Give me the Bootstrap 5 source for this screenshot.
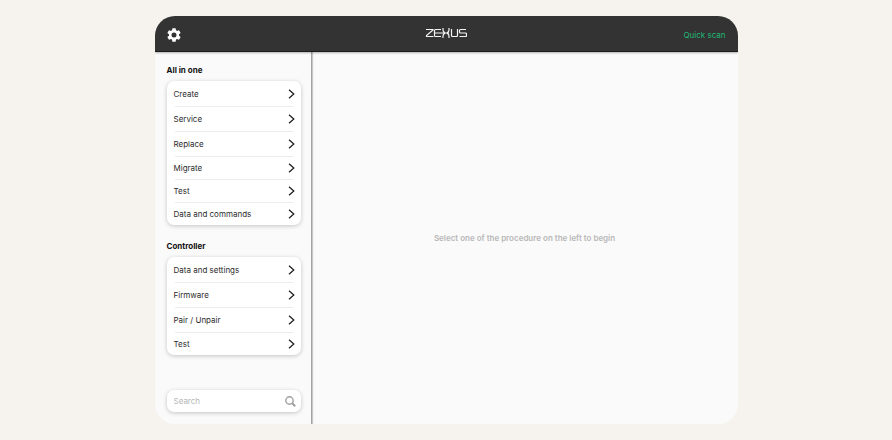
<!DOCTYPE html>
<html lang="en">
<head>
<meta charset="utf-8">
<meta name="viewport" content="width=device-width, initial-scale=1">
<title>Zehus</title>
<link href="https://cdn.jsdelivr.net/npm/bootstrap@5.3.0/dist/css/bootstrap.min.css" rel="stylesheet">
<style>
  body { background: #f6f3ee; font-family: Inter, "Liberation Sans", sans-serif; font-size: 8px; line-height: 12px; color: #2c2c2c; }
  .app-window { width: 100%; max-width: 583px; border-radius: 20px; background: #fafafa; }
  .app-bar { height: 36px; padding: 3px 12px 0; background: #333; border-bottom: 1px solid #1c1c1c; box-shadow: 0 1px 2px rgba(0,0,0,.3); z-index: 1; }
  .app-bar svg, .menu-row svg, .search-box svg { display: block; }
  .settings-btn { line-height: 0; }
  .quick-link { color: #1fb876; }
  .side-panel { width: 157px; padding: 12px 10px 12px 12px; border-right: 1px solid #a3a3a3; box-shadow: 1px 0 1px rgba(0,0,0,.2); }
  .group-title { font-size: 8px; line-height: 12px; font-weight: 700; color: #111; }
  .soft-card { background: #fff; border-radius: 7px; box-shadow: 0 1px 4px rgba(0,0,0,.22); }
  .menu-card { margin: 5px 0 15px; }
  .menu-row { height: 25px; padding: 0 6px 0 7px; color: #2c2c2c; }
  .menu-row.tight, .menu-row:last-child { height: 23px; }
  .menu-row + .menu-row { background: linear-gradient(#ececec, #ececec) 8px 0 / calc(100% - 16px) 1px no-repeat; }
  .search-box { height: 22px; padding: 0 5px 0 7px; }
  .search-box input { font-size: 8px; line-height: 16px; height: 20px; color: #2c2c2c; outline: 0; min-width: 0; }
  .search-box input::placeholder { color: #b5b5b5; opacity: 1; }
  .hint { color: #b8b8b8; font-weight: 600; }
</style>
<script src="https://cdn.jsdelivr.net/npm/bootstrap@5.3.0/dist/js/bootstrap.bundle.min.js"></script>
</head>
<body>
<svg class="d-none" aria-hidden="true">
  <symbol id="chevron" viewBox="0 0 7 10"><path d="M1 .8 5.800 5 1 9.200" fill="none" stroke="#1a1a1a" stroke-width="1.200"/></symbol>
</svg>
<div class="d-flex justify-content-center vh-100 py-3">
  <div class="app-window d-flex flex-column overflow-hidden">
    <header class="app-bar row gx-0 align-items-center position-relative m-0">
      <div class="col">
        <button type="button" class="settings-btn btn p-0 border-0" aria-label="Settings">
          <svg width="14" height="14" viewBox="2 2 20 20" fill="#fff"><path d="M19.14 12.94c.04-.3.06-.61.06-.94 0-.32-.02-.64-.07-.94l2.03-1.58a.49.49 0 0 0 .12-.61l-1.92-3.32a.488.488 0 0 0-.59-.22l-2.39.96c-.5-.38-1.03-.7-1.62-.94l-.36-2.54a.484.484 0 0 0-.48-.41h-3.84c-.24 0-.43.17-.47.41l-.36 2.54c-.59.24-1.13.57-1.62.94l-2.39-.96c-.22-.08-.47 0-.59.22L2.74 8.87c-.12.21-.08.47.12.61l2.03 1.58c-.05.3-.09.63-.09.94s.02.64.07.94l-2.03 1.58a.49.49 0 0 0-.12.61l1.92 3.32c.12.22.37.29.59.22l2.39-.96c.5.38 1.03.7 1.62.94l.36 2.54c.05.24.24.41.48.41h3.84c.24 0 .44-.17.47-.41l.36-2.54c.59-.24 1.13-.56 1.62-.94l2.39.96c.22.08.47 0 .59-.22l1.92-3.32c.12-.22.07-.47-.12-.61l-2.01-1.58zM12 15.600A3.600 3.600 0 1 1 12 8.400a3.600 3.600 0 0 1 0 7.200z"/></svg>
        </button>
      </div>
      <div class="col-auto pb-1">
        <svg role="img" aria-label="Zehus" width="42" height="10" viewBox="0 0 42 10" fill="none" stroke="#f4f4f4" stroke-width="1.200"><path d="M1 1.500H8V2L1.500 7.500V8.500H8.500M16 1.500H10.500Q9.500 1.500 9.500 2.500V7.500Q9.500 8.500 10.500 8.500H16M9.500 5H24M18 0V2Q18 3.500 19.500 4.500L20 5L19.500 5.500Q18 6.500 18 8V10M24 0V2Q24 3.500 22.500 4.500L22 5L22.500 5.500Q24 6.500 24 8V10M26.500 1V7.500Q26.500 8.500 27.500 8.500H31.500Q32.500 8.500 32.500 7.500V1M41 1.500H35.500Q34.500 1.500 34.500 2.500V4Q34.500 5 35.500 5H40.500Q41.500 5 41.500 6V7.500Q41.500 8.500 40.500 8.500H34.500"/></svg>
      </div>
      <div class="col text-end"><a href="#" class="quick-link text-decoration-none">Quick scan</a></div>
    </header>
    <div class="d-flex flex-grow-1">
      <aside class="side-panel d-flex flex-column flex-shrink-0">
        <h2 class="group-title mb-0">All in one</h2>
        <nav class="menu-card soft-card d-flex flex-column" aria-label="All in one">
          <a href="#" class="menu-row d-flex align-items-center justify-content-between text-decoration-none">Create<svg width="7" height="10"><use href="#chevron"/></svg></a>
          <a href="#" class="menu-row d-flex align-items-center justify-content-between text-decoration-none">Service<svg width="7" height="10"><use href="#chevron"/></svg></a>
          <a href="#" class="menu-row d-flex align-items-center justify-content-between text-decoration-none">Replace<svg width="7" height="10"><use href="#chevron"/></svg></a>
          <a href="#" class="menu-row tight d-flex align-items-center justify-content-between text-decoration-none">Migrate<svg width="7" height="10"><use href="#chevron"/></svg></a>
          <a href="#" class="menu-row tight d-flex align-items-center justify-content-between text-decoration-none">Test<svg width="7" height="10"><use href="#chevron"/></svg></a>
          <a href="#" class="menu-row tight d-flex align-items-center justify-content-between text-decoration-none">Data and commands<svg width="7" height="10"><use href="#chevron"/></svg></a>
        </nav>
        <h2 class="group-title mb-0">Controller</h2>
        <nav class="menu-card soft-card d-flex flex-column" aria-label="Controller">
          <a href="#" class="menu-row d-flex align-items-center justify-content-between text-decoration-none">Data and settings<svg width="7" height="10"><use href="#chevron"/></svg></a>
          <a href="#" class="menu-row d-flex align-items-center justify-content-between text-decoration-none">Firmware<svg width="7" height="10"><use href="#chevron"/></svg></a>
          <a href="#" class="menu-row d-flex align-items-center justify-content-between text-decoration-none">Pair / Unpair<svg width="7" height="10"><use href="#chevron"/></svg></a>
          <a href="#" class="menu-row d-flex align-items-center justify-content-between text-decoration-none">Test<svg width="7" height="10"><use href="#chevron"/></svg></a>
        </nav>
        <form class="search-box soft-card d-flex align-items-center mt-auto" role="search">
          <input id="search" type="text" placeholder="Search" class="flex-grow-1 border-0 bg-transparent p-0">
          <label for="search"><svg role="img" aria-label="Search" width="11" height="11" viewBox="0 0 11 11" fill="none" stroke="#a0a0a0"><circle cx="4.500" cy="4.500" r="3.700" stroke-width="1.400"/><path d="M7 7 10.200 10.200" stroke-width="2"/></svg></label>
        </form>
      </aside>
      <main class="flex-grow-1 d-flex align-items-center justify-content-center">
        <p class="hint mb-0">Select one of the procedure on the left to begin</p>
      </main>
    </div>
  </div>
</div>
</body>
</html>
